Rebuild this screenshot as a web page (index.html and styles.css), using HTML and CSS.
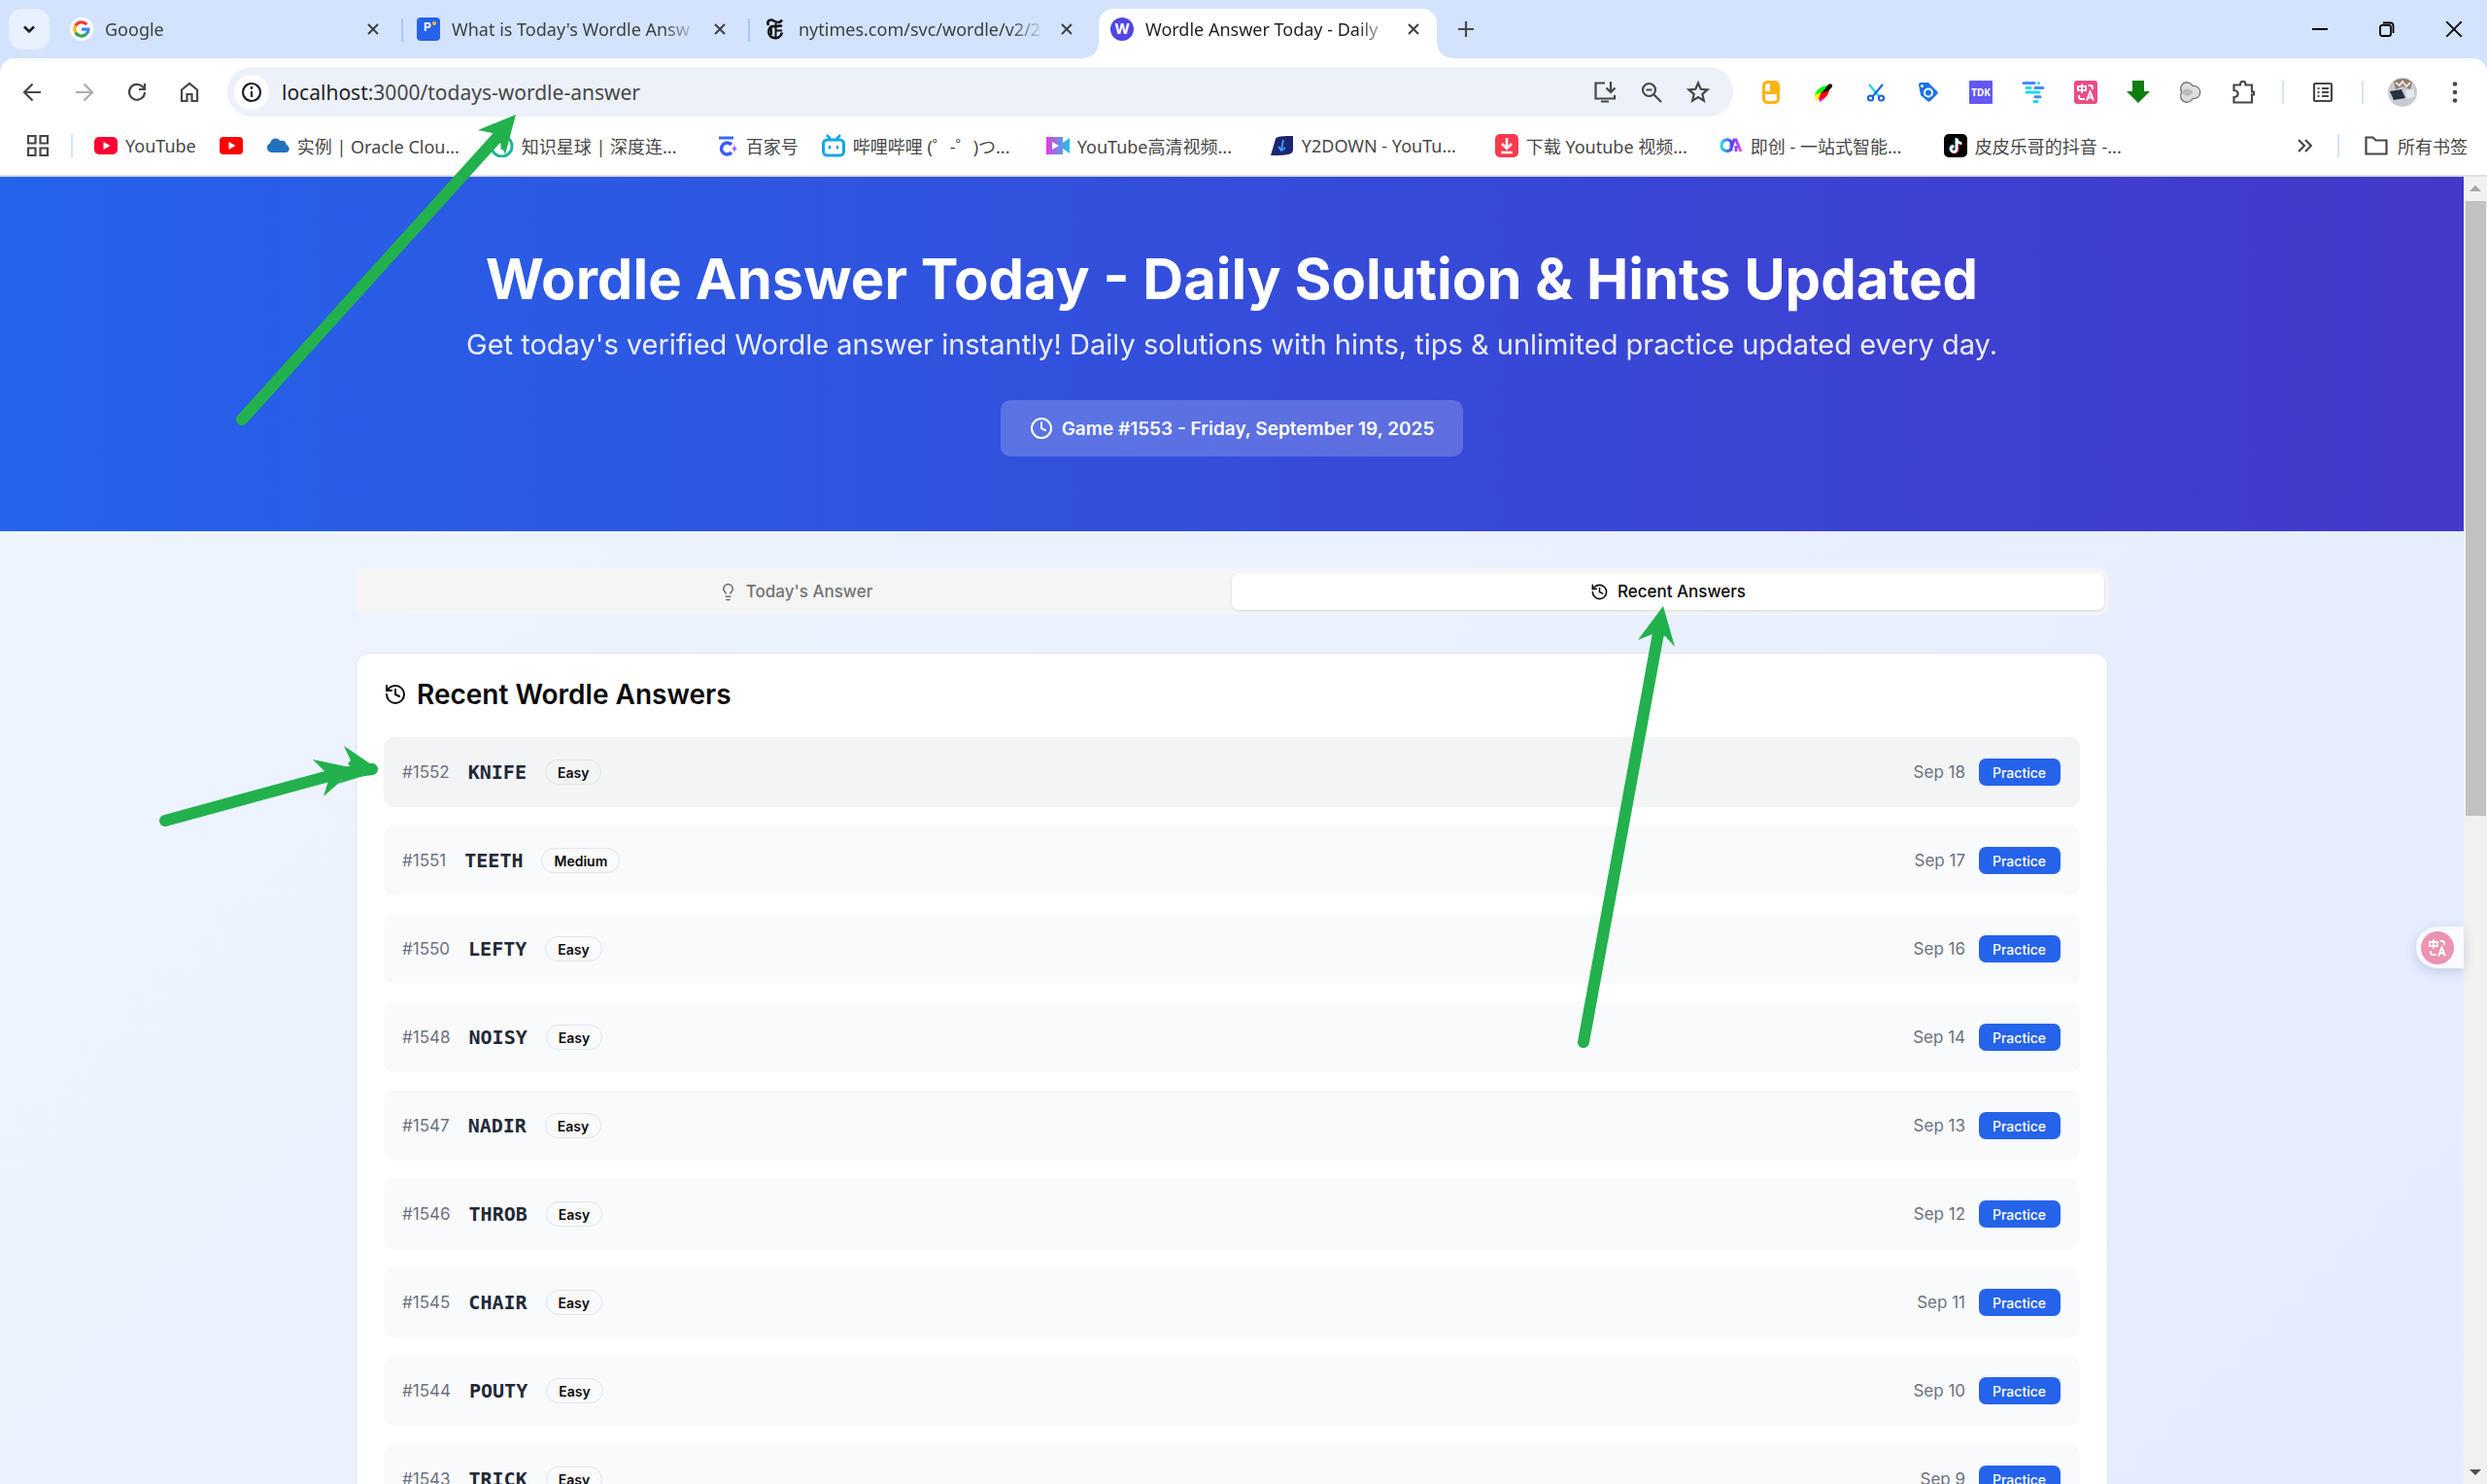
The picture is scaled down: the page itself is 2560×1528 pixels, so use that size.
FILE: index.html
```html
<!DOCTYPE html>
<html lang="en">
<head>
<meta charset="utf-8">
<title>Wordle Answer Today - Daily Solution &amp; Hints Updated</title>
<link rel="stylesheet" href="styles.css">
</head>
<body>
<div class="window">
  <header class="tabstrip">
    <button class="tab-search" aria-label="Search tabs"><svg class="i16" viewBox="0 0 16 16"><path d="M3 5.500l5 5 5-5" fill="none" stroke="#1f1f1f" stroke-width="2.600"/></svg></button>
    <div class="tab">
      <svg class="i24" viewBox="0 0 24 24"><circle cx="12" cy="12" r="12" fill="#fff"/><g fill="none" stroke-width="3.200"><path d="M17.300 7.300A7 7 0 0 0 5.800 8.500" stroke="#ea4335"/><path d="M5.800 8.500a7.200 7.200 0 0 0 0 7" stroke="#fbbc05"/><path d="M5.800 15.500A7 7 0 0 0 16.600 17.300" stroke="#34a853"/><path d="M16.600 17.300A7 7 0 0 0 19 12.200H12" stroke="#4285f4"/></g></svg>
      <span class="tab-title">Google</span>
      <button class="tab-close" aria-label="Close"><svg class="i16" viewBox="0 0 16 16"><path d="M3 3l10 10M13 3L3 13"/></svg></button>
    </div>
    <div class="tab divided">
      <svg class="i24" viewBox="0 0 24 24"><rect width="24" height="24" rx="4" fill="#2563eb"/><text x="7" y="14" class="glyph-p">P</text><circle cx="18" cy="6" r="2" fill="#fbbf24"/></svg>
      <span class="tab-title">What is Today's Wordle Answ</span>
      <button class="tab-close" aria-label="Close"><svg class="i16" viewBox="0 0 16 16"><path d="M3 3l10 10M13 3L3 13"/></svg></button>
    </div>
    <div class="tab divided">
      <svg class="i24" viewBox="0 0 24 24"><g fill="none" stroke="#121212" stroke-width="2.600"><path d="M5 8C2.500 3 7.500 1.500 10.500 3.500S17 6 19 2.500"/><path d="M19 9c-3-1.500-6 1-9 0-5 0-7 9-1 11.500 5 2 9-.500 10-5"/><path d="M12.500 6v15M8 11v7M12 13.500h7" stroke-width="2"/></g></svg>
      <span class="tab-title">nytimes.com/svc/wordle/v2/2</span>
      <button class="tab-close" aria-label="Close"><svg class="i16" viewBox="0 0 16 16"><path d="M3 3l10 10M13 3L3 13"/></svg></button>
    </div>
    <div class="tab active">
      <svg class="i24" viewBox="0 0 24 24"><circle cx="12" cy="12" r="12" fill="#4f46e5"/><text x="12" y="17" text-anchor="middle" class="glyph-w">W</text></svg>
      <span class="tab-title">Wordle Answer Today - Daily</span>
      <button class="tab-close" aria-label="Close"><svg class="i16" viewBox="0 0 16 16"><path d="M3 3l10 10M13 3L3 13"/></svg></button>
    </div>
    <button class="new-tab" aria-label="New tab"><svg class="i18" viewBox="0 0 18 18"><path d="M9 1v16M1 9h16" stroke="#474747" stroke-width="2.200"/></svg></button>
    <div class="window-controls">
      <button aria-label="Minimize"><svg class="i16" viewBox="0 0 16 16"><path d="M0 8h16" stroke="#000" stroke-width="2"/></svg></button>
      <button aria-label="Restore"><svg class="i16" viewBox="0 0 16 16"><g fill="none" stroke="#000" stroke-width="1.800"><rect x="1" y="4" width="11" height="11" rx="2"/><path d="M4 1.500h7.500a3 3 0 0 1 3 3V12"/></g></svg></button>
      <button aria-label="Close window"><svg class="i16" viewBox="0 0 16 16"><path d="M0 0l16 16M16 0L0 16" stroke="#000" stroke-width="1.800"/></svg></button>
    </div>
  </header>

  <div class="toolbar">
    <button aria-label="Back"><svg class="i24" viewBox="0 0 24 24"><path d="M21 12H4M12.500 3.500L4 12l8.500 8.500" class="line"/></svg></button>
    <button aria-label="Forward" class="dim"><svg class="i24" viewBox="0 0 24 24"><path d="M3 12h17M11.500 3.500L20 12l-8.500 8.500" class="line"/></svg></button>
    <button aria-label="Reload"><svg class="i24" viewBox="0 0 24 24"><path d="M20 12a8 8 0 1 1-2.500-6L20 8.500M20 3v6h-6" class="line"/></svg></button>
    <button aria-label="Home"><svg class="i24" viewBox="0 0 24 24"><path d="M4 9.500L12 3l8 6.500V21h-5.500v-7h-5v7H4z" class="line"/></svg></button>
    <div class="omnibox">
      <span class="site-info"><svg class="i24" viewBox="0 0 24 24"><circle cx="12" cy="12" r="9" class="line"/><path d="M12 11v6" class="line"/><circle cx="12" cy="7.500" r="1.400"/></svg></span>
      <span class="url"><b>localhost</b>:3000/todays-wordle-answer</span>
      <button aria-label="Install"><svg class="i26" viewBox="0 0 26 26"><path d="M13 3.500H3.500v16h19.500V16M9 22.500h8" class="line"/><path d="M19 2v10M14.500 8.500L19 13l4.500-4.500" class="line"/></svg></button>
      <button aria-label="Zoom"><svg class="i24" viewBox="0 0 24 24"><circle cx="9.500" cy="9.500" r="6.500" class="line"/><path d="M14.500 14.500L22 22M6.500 9.500h6" class="line"/></svg></button>
      <button aria-label="Bookmark"><svg class="i24" viewBox="0 0 24 24"><path d="M12 2.500l2.700 6.300 6.800.600-5.200 4.500 1.600 6.700L12 17l-5.900 3.600 1.600-6.700L2.500 9.400l6.800-.600z" class="line"/></svg></button>
    </div>
    <div class="extensions">
      <button aria-label="Notes"><svg class="i24" viewBox="0 0 24 24"><rect x="3" y="0" width="18" height="24" rx="5" fill="#ffb414"/><path d="M6 11V6a3 3 0 0 1 3-3h2v8zM6 14h12v4a3 3 0 0 1-3 3H9a3 3 0 0 1-3-3z" fill="#fff"/></svg></button>
      <button aria-label="Picker"><svg class="i24" viewBox="0 0 24 24"><path d="M3 15C5 9 10 5 17 5L9 14z" fill="#0f0"/><path d="M3 15l7-3-3 8-3 0z" fill="#ff0"/><path d="M9 13l9-7c1 5-2 10-6 13H7z" fill="#f00"/><path d="M7 18l5 1c-1 1-2 2-4 3z" fill="#f0f"/><path d="M10 13l7-9c2-2 5 0 4 2-1 3-5 5-11 7z" fill="#111"/></svg></button>
      <button aria-label="Clipper"><svg class="i24" viewBox="0 0 24 24"><g fill="none" stroke-width="2"><path d="M5 4l10 12" stroke="#20d0f0"/><path d="M19 4L8 17" stroke="#1763d0"/><circle cx="6.500" cy="18" r="2.600" stroke="#1763d0"/><circle cx="17.500" cy="18" r="2.600" stroke="#1763d0"/></g></svg></button>
      <button aria-label="Tag"><svg class="i24" viewBox="0 0 24 24"><path d="M2 4c0-1 1-2 2-2h8l9 9c1 1 1 2 0 3l-7 7c-1 1-2 1-3 0l-7-6z" fill="#1a73e8"/><circle cx="12" cy="12.500" r="4" fill="none" stroke="#fff" stroke-width="2"/><circle cx="5.500" cy="5.500" r="1.500" fill="#fff"/></svg></button>
      <button aria-label="TDK"><svg class="i24" viewBox="0 0 24 24"><rect width="24" height="24" rx="1" fill="#6258f5"/><text x="12" y="16" text-anchor="middle" class="glyph-tdk">TDK</text></svg></button>
      <button aria-label="Outline"><svg class="i24" viewBox="0 0 24 24"><g fill="none" stroke-width="3" stroke-linecap="round"><path d="M2 2.500h11" stroke="#4d87ff"/><path d="M17.500 2.500h.1M5 7.500h4" stroke="#14dcf5"/><path d="M14 7.500h8" stroke="#4d87ff"/><path d="M5 12h13" stroke="#14dcf5"/><path d="M14 16.800h5" stroke="#4d87ff"/><path d="M13 21.500h3" stroke="#14dcf5"/></g></svg></button>
      <button aria-label="Translate"><svg class="i24" viewBox="0 0 24 24"><use href="#translate-tile"/></svg></button>
      <button aria-label="Download"><svg class="i24" viewBox="0 0 24 24"><path d="M6 0h12v11h6L12 23 0 11h6z" fill="#0e7d12"/></svg></button>
      <button aria-label="Assistant"><svg class="i24" viewBox="0 0 24 24"><path d="M14 5.500A6.500 6.500 0 1 0 2.800 12 6.500 6.500 0 1 0 14 18.500 6.600 6.600 0 1 0 14 5.500z" fill="#ddd" stroke="#777" stroke-width="1.400"/><path d="M3 12c3-5 10-4 11 0-1 4-8 5-11 0z" fill="#bbb"/></svg></button>
      <button aria-label="Extensions"><svg class="i26" viewBox="0 0 26 26"><path d="M3.500 5.500h6.500c-.500-5 6-5 5.500 0H22v7h2v3h-2v8H3.500V18c5.500-.500 5.500-6.500 0-7z" class="line"/></svg></button>
    </div>
    <span class="sep"></span>
    <button aria-label="Reading list"><svg class="i24" viewBox="0 0 24 24"><rect x="3" y="3" width="18" height="18" rx="1" class="line"/><path d="M6.500 8h2M6.500 12h2M6.500 16h2M11 8h7M11 12h7M11 16h7" class="line"/></svg></button>
    <span class="sep"></span>
    <button aria-label="Profile"><svg class="i30" viewBox="0 0 30 30"><circle cx="15" cy="15" r="15" fill="#c8ccd0"/><path d="M6 4a15 15 0 0 1 19 1l-2 7-8-3-7 3z" fill="#927b68"/><path d="M8 5l4 3 3-4 4 5 4-4" stroke="#e9e4de" fill="none" stroke-width="2"/><path d="M2 14l12-2 4 9-12 2z" fill="#233240"/><path d="M18 13l9-1v8l-7 2z" fill="#e5e9ed"/></svg></button>
    <button aria-label="Menu"><svg class="i24" viewBox="0 0 24 24"><circle cx="12" cy="3.500" r="2.300"/><circle cx="12" cy="12" r="2.300"/><circle cx="12" cy="20.500" r="2.300"/></svg></button>
  </div>

  <nav class="bookmarks">
    <button aria-label="Apps"><svg class="i24" viewBox="0 0 24 24"><path d="M2 2h7.500v7.500H2zM14.500 2H22v7.500h-7.500zM2 14.500h7.500V22H2zM14.500 14.500H22V22h-7.500z" class="line"/></svg></button>
    <span class="sep"></span>
    <a href="#"><svg class="i24" viewBox="0 0 24 24"><rect y="3" width="24" height="18" rx="5" fill="#ff0033"/><path d="M9.500 8v8l7-4z" fill="#fff"/></svg><span>YouTube</span></a>
    <a href="#" aria-label="YouTube"><svg class="i24" viewBox="0 0 24 24"><rect y="3" width="24" height="18" rx="4" fill="#f00"/><path d="M9.500 8v8l7-4z" fill="#fff"/></svg></a>
    <a href="#"><svg class="i24" viewBox="0 0 24 24"><path d="M5 19a5 5 0 0 1-1-9.500C5 3.500 12 3 14.500 7c3-1 6 .500 6.200 4C25 12.500 24.500 19 20 19z" fill="#2272bd"/></svg><span class="fixed">实例 | Oracle Clou...</span></a>
    <a href="#"><svg class="i24" viewBox="0 0 24 24"><path d="M16 3a10.500 10.500 0 1 1-9 0" fill="none" stroke="#18b89b" stroke-width="3"/><path d="M12 4v12" stroke="#18b89b" stroke-width="3"/></svg><span class="fixed">知识星球 | 深度连...</span></a>
    <a href="#"><svg class="i24" viewBox="0 0 24 24"><path d="M4 4h15" stroke="#2f6bff" stroke-width="3"/><path d="M17 11a6 6 0 1 0 0 8" stroke="#3d5cff" stroke-width="3.500" fill="none"/><path d="M20 11l1 3 2 1-2 1-1 3-1-3-2-1 2-1z" fill="#8b5cf6"/></svg><span>百家号</span></a>
    <a href="#"><svg class="i24" viewBox="0 0 24 24"><rect x="1.500" y="6" width="21" height="16" rx="4" fill="none" stroke="#13a8e0" stroke-width="3"/><path d="M5 1l4 4M19 1l-4 4" stroke="#13a8e0" stroke-width="2.500"/><path d="M8 12v3.500M16 12v3.500" stroke="#13a8e0" stroke-width="2.500"/></svg><span class="fixed">哔哩哔哩 (゜-゜)つ...</span></a>
    <a href="#"><svg class="i24" viewBox="0 0 24 24"><defs><linearGradient id="cam"><stop offset="0" stop-color="#e23be0"/><stop offset="1" stop-color="#20c4ea"/></linearGradient></defs><path d="M0 3h17v6l7-5v16l-7-5v6H0z" fill="url(#cam)"/><path d="M6 8v8l7-4z" fill="#fff"/></svg><span class="fixed">YouTube高清视频...</span></a>
    <a href="#"><svg class="i24" viewBox="0 0 24 24"><path d="M5 5c1-2 3-3 18-3v15c-1 4-5 5-23 5z" fill="#1b2672"/><path d="M13 6l-2 10M8 13l3 4 4-3" stroke="#3ca0ff" stroke-width="1.800" fill="none"/></svg><span class="fixed">Y2DOWN - YouTu...</span></a>
    <a href="#"><svg class="i24" viewBox="0 0 24 24"><rect width="24" height="24" rx="5" fill="#fb3a4d"/><path d="M12 4v10M7 10l5 5 5-5M6 19h12" stroke="#fff" stroke-width="2.500" fill="none"/></svg><span class="fixed">下载 Youtube 视频...</span></a>
    <a href="#"><svg class="i24" viewBox="0 0 24 24"><defs><linearGradient id="duo"><stop offset="0" stop-color="#2bd0fa"/><stop offset=".5" stop-color="#4b47f5"/><stop offset="1" stop-color="#e84bf0"/></linearGradient></defs><path d="M12 17V8c-3-4-10-2-10 4s8 7 10 3l3-9h2l5 12M17 12v6" fill="none" stroke="url(#duo)" stroke-width="3"/></svg><span class="fixed">即创 - 一站式智能...</span></a>
    <a href="#"><svg class="i24" viewBox="0 0 24 24"><rect width="24" height="24" rx="5" fill="#000"/><g fill="none" stroke-width="2.400"><path d="M12.500 4v11a3 3 0 1 1-3-3M12.500 5c1 3 3 4 5 4" stroke="#25f4ee"/><path d="M14 5v11a3 3 0 1 1-3-3M14 6c1 3 3 4 5 4" stroke="#fe2c55"/><path d="M13.200 4.500v11a3 3 0 1 1-3-3M13.200 5.500c1 3 3 4 5 4" stroke="#fff"/></g></svg><span class="fixed">皮皮乐哥的抖音 -...</span></a>
    <div class="bookmarks-end">
      <button aria-label="More bookmarks"><svg class="i16" viewBox="0 0 16 16"><path d="M2 2l6 6-6 6M9 2l6 6-6 6" class="line"/></svg></button>
      <span class="sep"></span>
      <a href="#"><svg class="i24" viewBox="0 0 24 24"><path d="M1.500 3.500h7l3 3h11v14h-21z" class="line"/></svg><span>所有书签</span></a>
    </div>
  </nav>

  <div class="viewport">
    <div class="page">
      <section class="hero">
        <h1>Wordle Answer Today - Daily Solution &amp; Hints Updated</h1>
        <p>Get today's verified Wordle answer instantly! Daily solutions with hints, tips &amp; unlimited practice updated every day.</p>
        <div class="game-date"><svg class="i24" viewBox="0 0 24 24"><circle cx="12" cy="12" r="10"/><path d="M12 6v6l4 2"/></svg>Game #1553 - Friday, September 19, 2025</div>
      </section>
      <main class="content">
        <div class="view-tabs" role="tablist">
          <button role="tab"><svg class="i19" viewBox="0 0 24 24"><path d="M15 14c.200-1 .700-1.700 1.500-2.500 1-.900 1.500-2.200 1.500-3.500A6 6 0 0 0 6 8c0 1 .200 2.200 1.500 3.500.700.700 1.300 1.500 1.500 2.500M9 18h6M10 22h4"/></svg>Today's Answer</button>
          <button role="tab" aria-selected="true"><svg class="i19" viewBox="0 0 24 24"><use href="#history"/></svg>Recent Answers</button>
        </div>
        <section class="card">
          <h2><svg class="i24" viewBox="0 0 24 24"><use href="#history"/></svg>Recent Wordle Answers</h2>
          <ul class="answers">
            <li class="hovered"><span class="num">#1552</span><span class="word">KNIFE</span><span class="level">Easy</span><time>Sep 18</time><button>Practice</button></li>
            <li><span class="num">#1551</span><span class="word">TEETH</span><span class="level">Medium</span><time>Sep 17</time><button>Practice</button></li>
            <li><span class="num">#1550</span><span class="word">LEFTY</span><span class="level">Easy</span><time>Sep 16</time><button>Practice</button></li>
            <li><span class="num">#1548</span><span class="word">NOISY</span><span class="level">Easy</span><time>Sep 14</time><button>Practice</button></li>
            <li><span class="num">#1547</span><span class="word">NADIR</span><span class="level">Easy</span><time>Sep 13</time><button>Practice</button></li>
            <li><span class="num">#1546</span><span class="word">THROB</span><span class="level">Easy</span><time>Sep 12</time><button>Practice</button></li>
            <li><span class="num">#1545</span><span class="word">CHAIR</span><span class="level">Easy</span><time>Sep 11</time><button>Practice</button></li>
            <li><span class="num">#1544</span><span class="word">POUTY</span><span class="level">Easy</span><time>Sep 10</time><button>Practice</button></li>
            <li><span class="num">#1543</span><span class="word">TRICK</span><span class="level">Easy</span><time>Sep 9</time><button>Practice</button></li>
          </ul>
        </section>
      </main>
    </div>
    <div class="scrollbar">
      <svg class="i24" viewBox="0 0 24 24"><path d="M6 15l6-6 6 6z" fill="#a3a3a3"/></svg>
      <span class="thumb"></span>
      <svg class="i24" viewBox="0 0 24 24"><path d="M6 9l6 6 6-6z" fill="#505050"/></svg>
    </div>
    <button class="translate-fab" aria-label="Translate"><svg class="i34" viewBox="0 0 34 34"><circle cx="17" cy="17" r="17" fill="#ec93b2"/><use href="#translate-mark" x="5" y="5"/></svg></button>
  </div>
</div>

<svg class="annotations" aria-hidden="true">
  <g fill="#22b14c" stroke="#22b14c">
    <path d="M249 432L514 139" class="shaft"/>
    <path d="M531 118L492 134l15 3 8 10 5 12z" stroke="none"/>
    <path d="M170 845L346 797 383 792" class="shaft"/>
    <path d="M360 790l-38-8 12 12 4 10-5 16 16-14z" stroke="none"/>
    <path d="M354 768l28 19 1 11-6 0-29 9 14-16-4-5 3-3z" stroke="none"/>
    <path d="M1630 1073L1707 652" class="shaft"/>
    <path d="M1712 624l-26 35 15-6 13 2 10 11z" stroke="none"/>
  </g>
</svg>

<svg class="defs" aria-hidden="true">
  <symbol id="history" viewBox="0 0 24 24"><path d="M3 12a9 9 0 1 0 9-9 9.750 9.750 0 0 0-6.740 2.740L3 8"/><path d="M3 3v5h5M12 7v5l4 2"/></symbol>
  <g id="translate-mark" fill="none" stroke="#fff" stroke-width="2"><path d="M4 6h8v4H4zM8 3.500v9.500M14.500 5h2a2.500 2.500 0 0 1 2.500 2.500V9M5 15v1.500A2.500 2.500 0 0 0 7.500 19H11M13 20.500l3.500-9 3.500 9M14.500 17.500h4"/></g>
  <g id="translate-tile"><rect width="24" height="24" rx="3" fill="#ea4c89"/><use href="#translate-mark"/></g>
</svg>
</body>
</html>
```
FILE: styles.css
```css
* { box-sizing: border-box; }
body { margin: 0; font-family: "Inter", "Liberation Sans", sans-serif; color: #0a0a0a; }
button { border: 0; padding: 0; margin: 0; background: none; font: inherit; color: inherit; display: flex; align-items: center; justify-content: center; }
a { color: inherit; text-decoration: none; }
svg { flex: none; display: block; }
.i16 { width: 16px; height: 16px; }
.i18 { width: 18px; height: 18px; }
.i19 { width: 19px; height: 19px; }
.i24 { width: 24px; height: 24px; }
.i26 { width: 26px; height: 26px; }
.i30 { width: 30px; height: 30px; }
.i34 { width: 34px; height: 34px; }
.line { fill: none; stroke: currentColor; stroke-width: 2.2; }
.defs { position: absolute; width: 0; height: 0; }

.window { height: 100vh; display: flex; flex-direction: column; overflow: hidden; background: #d3e3fd; }

/* Tab strip */
.tabstrip { height: 60px; flex: none; display: flex; align-items: flex-start; padding: 9px 0 0 9px; font: 18px "Noto Sans", "Noto Sans CJK SC", sans-serif; color: #3c4043; }
.tab-search { width: 42px; height: 42px; border-radius: 14px; background: #e9f0fe; margin-right: 9px; }
.tab { width: 357px; height: 42px; padding: 0 21px 0 16px; display: flex; align-items: center; position: relative; }
.tab:first-of-type { width: 353px; padding-left: 12px; }
.tab.divided::before { content: ""; position: absolute; left: 0; top: 10px; width: 2px; height: 24px; background: #a8c7fa; }
.tab.active { width: 348px; height: 51px; margin-left: 4px; padding: 0 16px 9px 12px; background: #fff; border-radius: 15px 15px 0 0; color: #1f1f1f; }
.tab.active::before, .tab.active::after { content: ""; position: absolute; bottom: 0; width: 15px; height: 15px; }
.tab.active::before { right: 100%; background: radial-gradient(circle at 0 0, transparent 14px, #fff 15px); }
.tab.active::after { left: 100%; background: radial-gradient(circle at 100% 0, transparent 14px, #fff 15px); }
.tab-title { flex: 1; min-width: 0; margin: 0 14px 0 12px; white-space: nowrap; overflow: hidden; -webkit-mask-image: linear-gradient(90deg, #000 calc(100% - 36px), transparent); mask-image: linear-gradient(90deg, #000 calc(100% - 36px), transparent); }
.tab-close path { stroke: #3c4043; stroke-width: 2; }
.new-tab { width: 42px; height: 42px; margin-left: 9px; }
.window-controls { margin-left: auto; display: flex; }
.window-controls button { width: 69px; height: 42px; }
.glyph-p { font: bold 12px "Inter", sans-serif; fill: #fff; }
.glyph-w { font: bold 15px "Inter", sans-serif; fill: #fff; }
.glyph-tdk { font: bold 10px "Noto Sans", sans-serif; fill: #fff; }

/* Toolbar */
.toolbar { height: 69px; flex: none; display: flex; align-items: center; padding-left: 6px; padding-right: 6px; background: #fff; border-radius: 15px 15px 0 0; color: #474747; fill: #474747; }
.toolbar > button { width: 54px; height: 42px; }
.toolbar > .dim { color: #aaa; }
.omnibox { flex: 1; height: 51px; margin: 0 12px; padding: 0 12px 0 7px; display: flex; align-items: center; border-radius: 26px; background: #ecf1fa; }
.omnibox button { width: 48px; height: 42px; }
.site-info { width: 36px; height: 36px; border-radius: 50%; background: #fff; display: flex; align-items: center; justify-content: center; color: #1f1f1f; fill: #1f1f1f; }
.url { flex: 1; margin-left: 13px; font: 21px "Noto Sans", sans-serif; color: #474747; }
.url b { font-weight: 400; color: #1f1f1f; }
.extensions { display: flex; }
.extensions button { width: 54px; height: 42px; }
.sep { width: 2px; height: 24px; flex: none; background: #d3e3fd; }
.toolbar .sep { margin: 0 13px; }

/* Bookmarks */
.bookmarks { height: 53px; flex: none; display: flex; align-items: center; gap: 24px; padding: 0 20px 9px 27px; background: #fff; border-bottom: 2px solid #e0e0e0; color: #474747; font: 18px "Noto Sans", "Noto Sans CJK SC", sans-serif; white-space: nowrap; }
.bookmarks > .sep { margin: 0 -2px; }
.bookmarks a { display: flex; align-items: center; gap: 8px; }
.fixed { width: 175px; }
.bookmarks-end { margin-left: auto; display: flex; align-items: center; gap: 26px; }
.bookmarks-end a { gap: 10px; }

/* Page */
.viewport { flex: 1; min-height: 0; position: relative; display: flex; overflow: hidden; }
.page { flex: 1; min-height: 206%; align-self: flex-start; display: flex; flex-direction: column; background: linear-gradient(135deg, #eff6ff, #e0e7ff); }
.hero { padding: 71px 0 77px; background: linear-gradient(90deg, #2563eb, #4338ca); color: #fff; text-align: center; }
.hero h1 { margin: 0 0 17px; font-size: 58px; line-height: 68px; font-weight: 700; }
.hero p { margin: 0 0 40px; font-size: 29px; line-height: 34px; opacity: .9; }
.game-date { display: inline-flex; align-items: center; gap: 9px; height: 58px; padding: 0 30px; border-radius: 10px; background: rgba(255, 255, 255, .2); font-size: 19px; font-weight: 600; }
.game-date svg { fill: none; stroke: #fff; stroke-width: 2; stroke-linecap: round; }
.content { flex: 1; width: 100%; max-width: 1844px; margin: 0 auto; padding: 38px 20px; display: flex; flex-direction: column; }
.content svg { fill: none; stroke: currentColor; stroke-width: 2; stroke-linecap: round; stroke-linejoin: round; }
.view-tabs { display: grid; grid-template-columns: 1fr 1fr; height: 48px; padding: 5px 4px; border-radius: 10px; background: #f5f5f5; color: #737373; font-size: 17px; font-weight: 500; }
.view-tabs button { gap: 9px; border-radius: 7px; }
.view-tabs [aria-selected] { background: #fff; color: #0a0a0a; box-shadow: 0 1px 3px rgba(0, 0, 0, .12); }
.card { flex: 1; margin-top: 39px; padding: 24px 28px; border: 1px solid #e3e5ea; border-radius: 14px; background: #fff; }
.card h2 { margin: 0; display: flex; align-items: center; gap: 10px; font-size: 28px; line-height: 36px; font-weight: 600; }
.answers { list-style: none; margin: 26px 0 0; padding: 0; display: grid; gap: 19px; }
.answers li { height: 72px; padding: 0 20px 0 19px; display: flex; align-items: center; border-radius: 10px; background: #f9fafb; }
.answers .hovered { background: #f3f4f6; }
.num, .answers time { font-size: 17px; color: #6b7280; }
.word { margin: 0 19px; font: bold 20px "DejaVu Sans Mono", monospace; color: #1f2937; }
.level { height: 26px; padding: 0 12px; display: flex; align-items: center; border: 1px solid #e5e5e5; border-radius: 13px; font-size: 14px; font-weight: 600; }
.answers time { margin-left: auto; }
.answers button { height: 28px; margin-left: 14px; padding: 0 15px 0 14px; border-radius: 7px; background: #2563eb; color: #fff; font-size: 14px; font-weight: 500; }

.scrollbar { width: 24px; flex: none; display: flex; flex-direction: column; background: #f1f1f1; }
.thumb { height: 47%; margin: 1px 1px auto 2px; background: #c1c1c1; }
.translate-fab { position: absolute; right: 24px; top: 772px; width: 49px; height: 43px; padding-left: 5px; justify-content: flex-start; border-radius: 22px 0 0 22px; background: #f8faff; box-shadow: 0 4px 12px rgba(60, 70, 120, .2); }

.annotations { position: absolute; left: 0; top: 0; width: 100%; height: 100vh; pointer-events: none; }
.shaft { fill: none; stroke-width: 12; stroke-linecap: round; stroke-linejoin: round; }
```
